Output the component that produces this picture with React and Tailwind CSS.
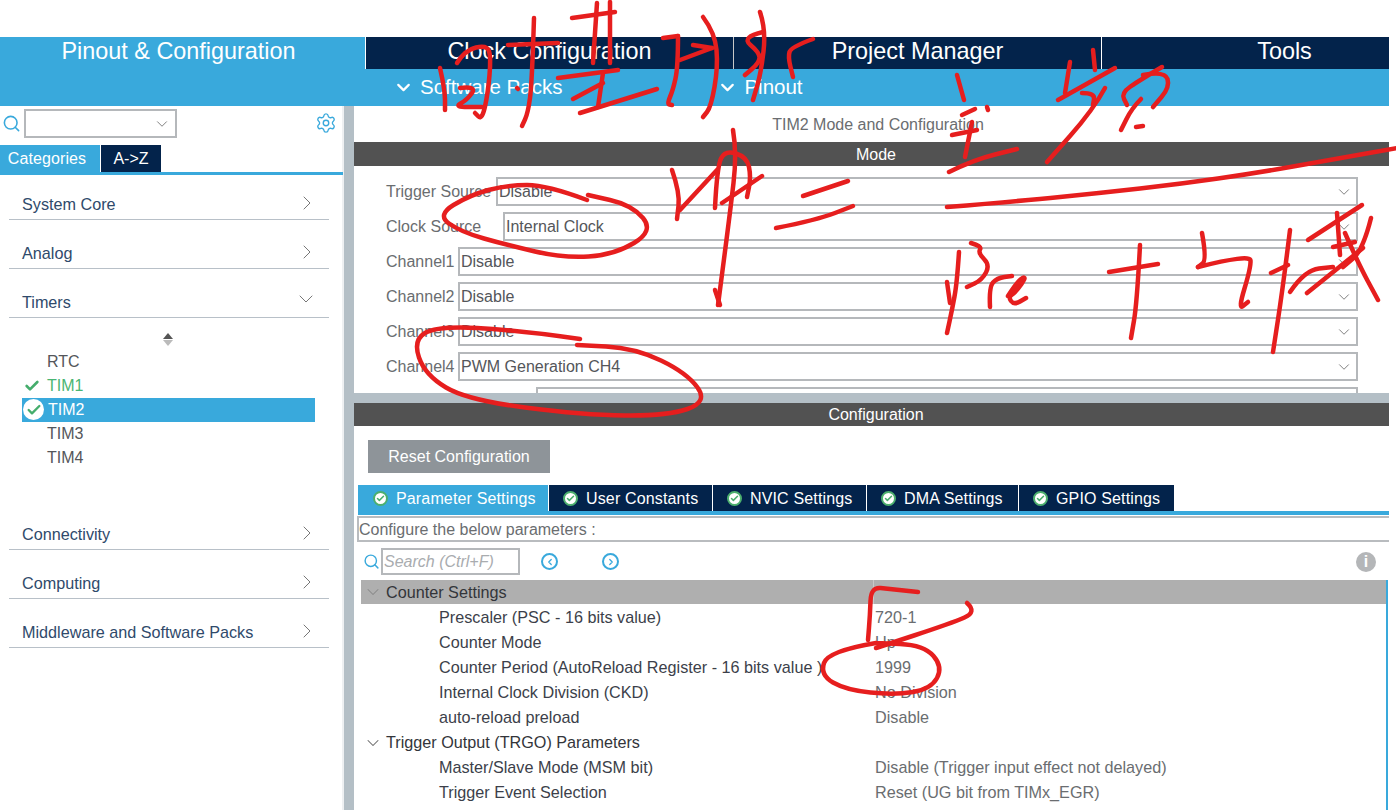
import { ChevronDown, ChevronRight, ChevronLeft, Search, Settings, Check } from "lucide-react";

// red pen notes drawn over the screenshot, as [x, y] points of each stroke
const strokes = [
  // top title
  [[440, 68], [445, 90], [445, 110]],
  [[457, 63], [465, 50], [487, 45], [491, 57], [488, 93], [482, 120], [475, 113]],
  [[460, 88], [477, 86], [467, 100], [454, 107], [482, 107]],
  [[534, 18], [532, 83], [528, 113], [522, 126]],
  [[508, 45], [558, 43]],
  [[517, 88], [518, 89]],
  [[572, 18], [615, 12]],
  [[597, 3], [593, 63]],
  [[610, 2], [610, 63]],
  [[558, 78], [618, 70]],
  [[573, 99], [603, 83]],
  [[603, 73], [598, 107]],
  [[580, 113], [657, 89]],
  [[663, 38], [678, 36]],
  [[678, 36], [678, 67], [673, 90], [667, 104], [672, 105]],
  [[680, 60], [712, 48]],
  [[693, 45], [712, 48]],
  [[703, 17], [715, 33], [718, 67], [711, 107], [703, 117]],
  [[760, 12], [766, 30], [761, 73], [753, 100]],
  [[763, 32], [741, 37], [760, 53], [759, 63], [745, 75]],
  [[813, 39], [791, 47], [788, 57], [793, 77]],
  // second line of the title
  [[957, 75], [964, 100]],
  [[962, 115], [975, 109]],
  [[987, 107], [988, 110]],
  [[952, 135], [977, 130]],
  [[972, 122], [965, 157]],
  [[949, 172], [973, 160], [1017, 149]],
  [[1070, 62], [1065, 93]],
  [[1058, 100], [1115, 68]],
  [[1093, 50], [1095, 70]],
  [[1105, 88], [1093, 110], [1047, 162]],
  [[1082, 93], [1095, 93], [1093, 105]],
  [[1162, 67], [1140, 80], [1121, 93], [1127, 105]],
  [[1143, 75], [1165, 71], [1170, 87], [1153, 107]],
  [[1141, 99], [1132, 108], [1121, 130]],
  [[1136, 127], [1143, 126]],
  // long line
  [[947, 207], [1020, 201], [1100, 193], [1180, 184], [1256, 173], [1330, 160], [1397, 148]],
  // middle
  [[672, 170], [680, 193], [677, 219]],
  [[680, 210], [717, 170]],
  [[715, 208], [717, 167], [725, 150], [747, 157], [751, 177], [747, 197]],
  [[722, 203], [762, 176]],
  [[733, 130], [737, 153], [730, 213], [718, 305]],
  [[715, 290], [720, 305]],
  [[803, 196], [848, 181]],
  [[776, 228], [817, 220], [853, 206]],
  // pre
  [[959, 252], [957, 283], [952, 310], [947, 333]],
  [[947, 282], [950, 303]],
  [[971, 243], [982, 246], [978, 253], [990, 265], [982, 280], [967, 287]],
  [[990, 307], [989, 287], [997, 278], [1012, 276]],
  [[1008, 296], [1018, 280], [1027, 276], [1016, 292], [1008, 297], [1014, 305], [1026, 298]],
  [[1109, 272], [1158, 264]],
  [[1140, 245], [1137, 303], [1131, 338]],
  [[1202, 233], [1207, 260], [1198, 267]],
  [[1198, 267], [1250, 254], [1251, 267], [1238, 310], [1248, 302]],
  [[1290, 230], [1283, 287], [1273, 352]],
  [[1271, 273], [1288, 265]],
  [[1308, 240], [1362, 205]],
  [[1337, 213], [1340, 255]],
  [[1290, 292], [1305, 270], [1333, 267]],
  [[1307, 293], [1363, 248]],
  [[1371, 218], [1363, 250], [1343, 267]],
  [[1345, 233], [1358, 263], [1378, 300]],
  [[1333, 247], [1355, 242]],
  // clock source circle
  [[587, 200], [547, 185], [507, 185], [470, 195], [437, 215], [461, 232], [507, 245], [563, 258], [614, 255], [654, 231], [632, 205], [588, 195]],
  // channel4 circle
  [[580, 339], [517, 330], [437, 326], [413, 340], [425, 375], [467, 400], [583, 415], [667, 416], [708, 402], [687, 373], [635, 348], [577, 345]],
  // prescaler bracket
  [[918, 592], [890, 589], [871, 587], [870, 615], [868, 640]],
  [[967, 603], [977, 612], [952, 623], [876, 648]],
  // 1999 circle
  [[876, 643], [828, 651], [820, 675], [846, 690], [895, 695], [931, 689], [943, 667], [924, 645], [876, 643]],
];

// midpoint smoothing, so a stroke looks like a pen and not a polyline
const toPath = (pts) => {
  if (pts.length < 3) return `M${pts[0][0]} ${pts[0][1]} L${pts[1][0]} ${pts[1][1]}`;
  let d = `M${pts[0][0]} ${pts[0][1]}`;
  for (let i = 1; i < pts.length - 1; i++) {
    const mx = (pts[i][0] + pts[i + 1][0]) / 2;
    const my = (pts[i][1] + pts[i + 1][1]) / 2;
    d += ` Q${pts[i][0]} ${pts[i][1]} ${mx} ${my}`;
  }
  const last = pts[pts.length - 1];
  return `${d} L${last[0]} ${last[1]}`;
};

const Caret = ({ className }) => (
  <ChevronDown className={className} strokeWidth={1.25} />
);

const TabIcon = () => (
  <span className="flex items-center justify-center w-[15px] h-[15px] rounded-full bg-white border-2 border-[#4caf6e]">
    <Check className="w-[9px] h-[9px] text-[#4caf6e]" strokeWidth={4} />
  </span>
);

const Category = ({ label, open, className = "h-[49px]" }) => (
  <div className={`mx-[9px] w-[320px] border-b border-[#b8c0c8] flex items-end justify-between pl-[13px] pr-[16px] pb-[3px] text-[16.2px] text-[#2f4a6b] ${className}`}>
    <span>{label}</span>
    {open ? (
      <ChevronDown className="w-[24px] h-[24px] mb-[3px] -mr-[5px] text-[#777]" strokeWidth={1} />
    ) : (
      <ChevronRight className="w-[24px] h-[24px] mb-[1px] -mr-[6px] text-[#777]" strokeWidth={1} />
    )}
  </div>
);

const TreeItem = ({ label, state }) => {
  if (state === "active") {
    return (
      <div className="h-[24px] ml-[22px] w-[293px] bg-[#39a9dc] flex items-center text-white relative">
        <span className="absolute left-[1px] top-[1px] w-[21px] h-[21px] rounded-full bg-white flex items-center justify-center">
          <Check className="w-[16px] h-[16px] text-[#45ad6c]" strokeWidth={3.5} />
        </span>
        <span className="ml-[26px]">{label}</span>
      </div>
    );
  }
  return (
    <div className={`h-[24px] flex items-center pl-[47px] relative ${state === "ok" ? "text-[#4ab573]" : "text-[#54565a]"}`}>
      {state === "ok" && (
        <Check className="absolute left-[24px] top-[4px] w-[16px] h-[16px] text-[#45ad6c]" strokeWidth={4} />
      )}
      {label}
    </div>
  );
};

const SelectRow = ({ label, value, left }) => (
  <div className="h-[35px] flex items-start relative">
    <span className="absolute left-[32px] top-[3px] text-[16px] text-[#6a6d70] whitespace-nowrap">{label}</span>
    <div
      className="h-[29px] border-2 border-[#b5b8bb] flex items-center justify-between pl-[1px] pr-[3px] text-[16px] text-[#54565a] absolute right-[31px]"
      style={{ left: left - 354 }}
    >
      <span>{value}</span>
      <Caret className="w-[18px] h-[18px] text-[#777]" />
    </div>
  </div>
);

const ConfigTab = ({ label, active, className }) => (
  <div className={`h-[26px] pt-[1px] flex items-center gap-[8px] text-[16px] tracking-[0.15px] text-white ${active ? "bg-[#39a9dc]" : "bg-[#03234b]"} ${className}`}>
    <TabIcon />
    <span>{label}</span>
  </div>
);

const params = [
  { label: "Counter Settings", head: true, first: true },
  { label: "Prescaler (PSC - 16 bits value)", value: "720-1" },
  { label: "Counter Mode", value: "Up" },
  { label: "Counter Period (AutoReload Register - 16 bits value )", value: "1999" },
  { label: "Internal Clock Division (CKD)", value: "No Division" },
  { label: "auto-reload preload", value: "Disable" },
  { label: "Trigger Output (TRGO) Parameters", head: true },
  { label: "Master/Slave Mode (MSM bit)", value: "Disable (Trigger input effect not delayed)" },
  { label: "Trigger Event Selection", value: "Reset (UG bit from TIMx_EGR)" },
];

const ParamRow = ({ row }) => {
  if (row.head) {
    return (
      <div className={`flex items-center text-[16.2px] text-[#33353a] pl-[2px] ${row.first ? "bg-[#afafaf] h-[24px] mb-[1px]" : "h-[25px]"}`}>
        <ChevronDown className={`w-[20px] h-[20px] mr-[3px] ${row.first ? "text-[#8a8a8a]" : "text-[#666]"}`} strokeWidth={1.25} />
        <span className="flex-1">{row.label}</span>
        {row.first && <span className="w-[1px] h-[24px] bg-[#c9c9c9] mr-[512px]" />}
      </div>
    );
  }
  return (
    <div className="h-[25px] flex items-center text-[16.2px]">
      <span className="w-[514px] pl-[78px] text-[#3c3f4a] whitespace-nowrap">{row.label}</span>
      <span className="text-[#6a6d70] whitespace-nowrap">{row.value}</span>
    </div>
  );
};

export default function App() {
  return (
    <div className="relative w-[1396px] h-[810px] overflow-hidden bg-white font-['Liberation_Sans',Arial,sans-serif]">
      <div className="h-[37px]" />
      {/* top tabs */}
      <div className="w-[1389px] h-[32px] flex bg-[#03234b] text-white text-[23.4px]">
        <div className="w-[365px] pb-[2px] bg-[#39a9dc] flex items-center justify-center pr-[8px]">Pinout &amp; Configuration</div>
        <div className="w-[368px] pb-[2px] border-l border-white flex items-center justify-center">Clock Configuration</div>
        <div className="w-[368px] pb-[2px] border-l border-[#c8c8c8] flex items-center justify-center">Project Manager</div>
        <div className="flex-1 pb-[2px] border-l border-white flex items-center justify-center pl-[78px]">Tools</div>
      </div>
      {/* sub menu */}
      <div className="w-[1389px] h-[37px] bg-[#39a9dc] flex items-center text-white text-[20.5px] pl-[393px]">
        <ChevronDown className="w-[21px] h-[21px] mr-[6px]" strokeWidth={2.5} />
        <span>Software Packs</span>
        <ChevronDown className="w-[21px] h-[21px] ml-[155px] mr-[6px]" strokeWidth={2.5} />
        <span>Pinout</span>
      </div>

      <div className="flex h-[704px]">
        {/* left side */}
        <div className="w-[344px] shrink-0 border-r-[2px] border-[#eef0f2]">
          <div className="h-[39px] flex items-center relative">
            <Search className="absolute left-[2px] top-[8px] w-[19px] h-[19px] text-[#39a9dc]" strokeWidth={2} />
            <div className="absolute left-[24px] top-[3px] w-[153px] h-[29px] border-2 border-[#b5b8bb] flex items-center justify-end pr-[4px]">
              <Caret className="w-[18px] h-[18px] text-[#777]" />
            </div>
            <Settings className="absolute left-[315px] top-[6px] w-[22px] h-[22px] text-[#39a9dc]" strokeWidth={1.5} />
          </div>
          <div className="h-[27px] flex text-[16px] text-white">
            <div className="w-[100px] bg-[#39a9dc] flex items-center justify-center tracking-[0.1px] pr-[6px]">Categories</div>
            <div className="w-[60px] ml-[1px] bg-[#03234b] flex items-center justify-center">A-&gt;Z</div>
          </div>
          <div className="h-[3px] w-[343px] bg-[#39a9dc]" />
          <Category label="System Core" className="h-[45px]" />
          <Category label="Analog" />
          <Category label="Timers" open />
          <div className="h-[81px] flex flex-col items-center">
            <div className="mt-[15px] mr-[6px] flex flex-col items-center gap-[1px]">
              <span className="w-0 h-0 border-x-[5px] border-x-transparent border-b-[6px] border-b-[#555]" />
              <span className="w-0 h-0 border-x-[5px] border-x-transparent border-t-[6px] border-t-[#bbb]" />
            </div>
          </div>
          <div className="text-[16px] -mt-[50px] h-[184px]">
            <div className="h-[1px]" />
            <TreeItem label="RTC" />
            <TreeItem label="TIM1" state="ok" />
            <TreeItem label="TIM2" state="active" />
            <TreeItem label="TIM3" />
            <TreeItem label="TIM4" />
          </div>
          <Category label="Connectivity" className="h-[49px] -mt-[32px]" />
          <Category label="Computing" />
          <Category label="Middleware and Software Packs" />
        </div>
        {/* gutter */}
        <div className="w-[10px] shrink-0 bg-[#b4bfc6]" />

        {/* right side */}
        <div className="w-[1035px] shrink-0 bg-[#b4bfc6] flex flex-col">
          <div className="h-[287px] bg-white overflow-hidden">
            <div className="h-[36px] pt-[1px] flex items-center justify-center text-[16px] text-[#6a6d70]">
              <span className="ml-[13px]">TIM2 Mode and Configuration</span>
            </div>
            <div className="h-[24px] pt-[1px] bg-[#525252] flex items-center justify-center text-[16px] text-white pl-[9px]">Mode</div>
            <div className="h-[11px]" />
            <SelectRow label="Trigger Source" value="Disable" left={496} />
            <SelectRow label="Clock Source" value="Internal Clock" left={503} />
            <SelectRow label="Channel1" value="Disable" left={458} />
            <SelectRow label="Channel2" value="Disable" left={458} />
            <SelectRow label="Channel3" value="Disable" left={458} />
            <SelectRow label="Channel4" value="PWM Generation CH4" left={458} />
            <SelectRow label="" value="" left={536} />
          </div>
          <div className="h-[10px]" />
          <div className="h-[23px] bg-[#525252] flex items-center justify-center text-[16px] text-white pl-[9px]">Configuration</div>
          <div className="flex-1 bg-white overflow-hidden relative">
            <div className="ml-[14px] mt-[14px] w-[182px] h-[33px] pt-[1px] bg-[#8e9499] flex items-center justify-center text-white text-[16px]">Reset Configuration</div>
            <div className="mt-[12px] ml-[4px] flex gap-[1px]">
              <ConfigTab label="Parameter Settings" active className="w-[190px] pl-[15px]" />
              <ConfigTab label="User Constants" className="w-[163px] pl-[14px]" />
              <ConfigTab label="NVIC Settings" className="w-[153px] pl-[14px]" />
              <ConfigTab label="DMA Settings" className="w-[151px] pl-[14px]" />
              <ConfigTab label="GPIO Settings" className="w-[155px] pl-[14px]" />
            </div>
            <div className="h-[4px] w-[1032px] ml-[4px] bg-[#39a9dc]" />
            <div className="mt-[1px] h-[26px] ml-[3px] w-[1032px] border-y-2 border-[#b9bcbf] border-l-2 flex items-center text-[16px] text-[#6a6d70] pt-[1px]">Configure the below parameters :</div>
            <div className="h-[38px] relative">
              <Search className="absolute left-[9px] top-[11px] w-[17px] h-[17px] text-[#39a9dc]" strokeWidth={2} />
              <div className="absolute left-[27px] top-[6px] w-[139px] h-[27px] border-2 border-[#b5b8bb] flex items-center pl-[1px] text-[16px] italic text-[#a9acaf]">Search (Ctrl+F)</div>
              <span className="absolute left-[187px] top-[11px] w-[17px] h-[17px] rounded-full border-2 border-[#39a9dc] flex items-center justify-center">
                <ChevronLeft className="w-[10px] h-[10px] text-[#39a9dc]" strokeWidth={3} />
              </span>
              <span className="absolute left-[248px] top-[11px] w-[17px] h-[17px] rounded-full border-2 border-[#39a9dc] flex items-center justify-center">
                <ChevronRight className="w-[10px] h-[10px] text-[#39a9dc]" strokeWidth={3} />
              </span>
              <span className="absolute left-[1002px] top-[10px] w-[20px] h-[20px] rounded-full bg-[#b4b6b8] flex items-center justify-center text-white text-[16px] font-bold">i</span>
            </div>
            <div className="ml-[7px] w-[1025px]">
              {params.map((row) => (
                <ParamRow key={row.label} row={row} />
              ))}
            </div>
            <span className="absolute right-[1px] top-[154px] bottom-0 w-[2px] bg-[#39a9dc]" />
          </div>
        </div>
      </div>

      <svg className="absolute left-0 top-0 pointer-events-none" width="1396" height="810" viewBox="0 0 1396 810" fill="none">
        {strokes.map((pts, i) => (
          <path key={i} d={toPath(pts)} stroke="#e61e1e" strokeWidth="4.5" strokeLinecap="round" strokeLinejoin="round" />
        ))}
      </svg>
    </div>
  );
}
